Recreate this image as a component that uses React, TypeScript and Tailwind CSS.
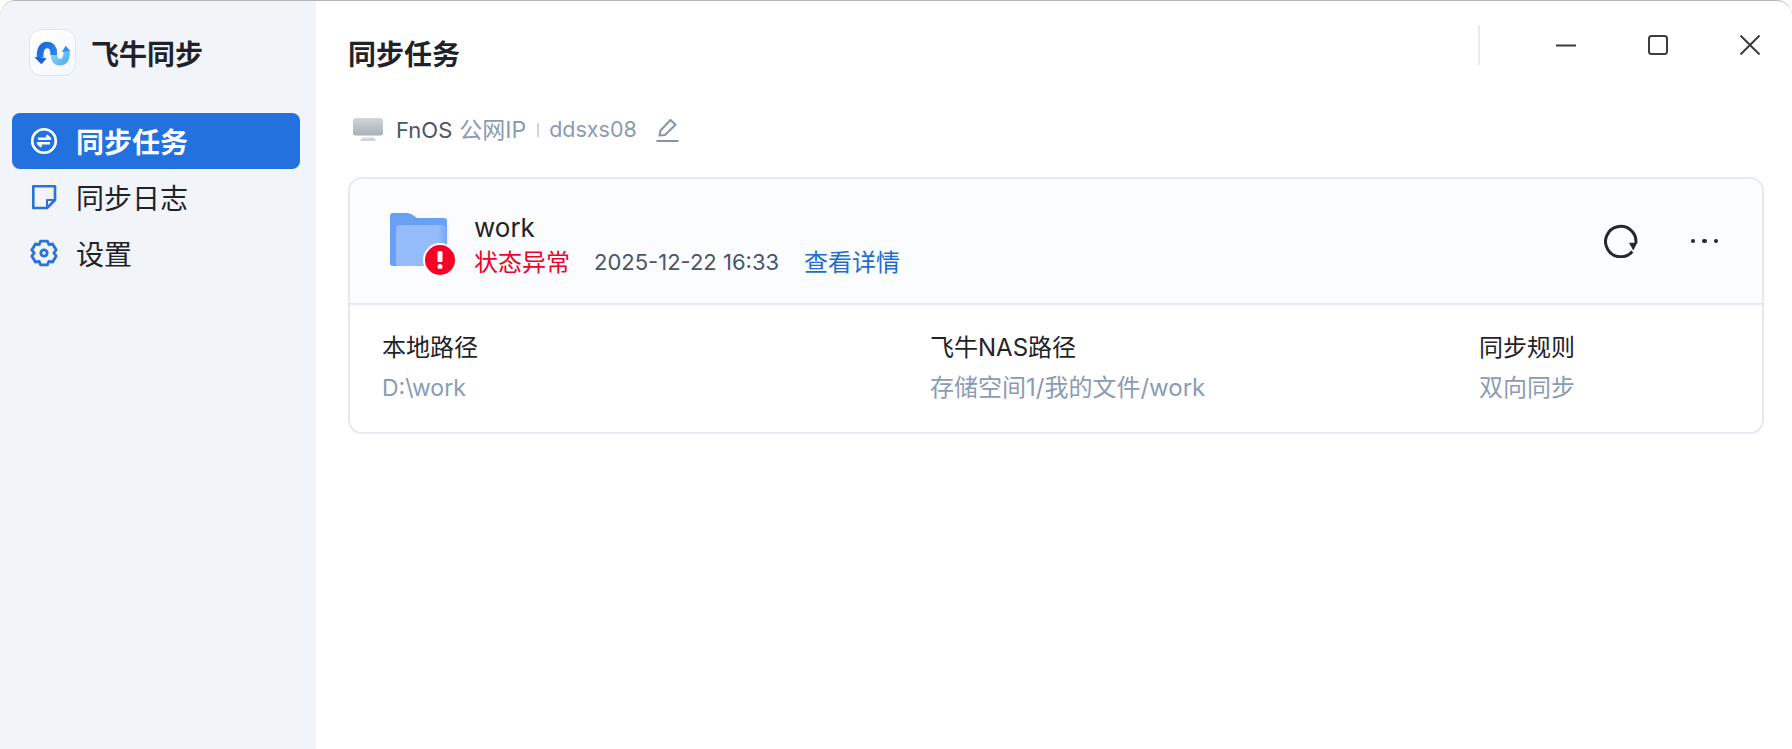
import React from "react";

const font = { fontFamily: '"Inter", "Noto Sans CJK SC", sans-serif' };

function Logo() {
  return (
    <div className="flex h-[47px] w-[47px] shrink-0 items-center justify-center rounded-[12px] border border-[#dfe3f3] bg-gradient-to-br from-white to-[#f3f7fe]">
      <svg width="46" height="46" viewBox="0 0 46 46" fill="none">
        <defs>
          <linearGradient id="lg1" x1="8" y1="12" x2="26" y2="28" gradientUnits="userSpaceOnUse">
            <stop offset="0" stopColor="#1a5fd6" />
            <stop offset="1" stopColor="#2f8df0" />
          </linearGradient>
          <linearGradient id="lg2" x1="22" y1="20" x2="40" y2="36" gradientUnits="userSpaceOnUse">
            <stop offset="0" stopColor="#8fd8fc" />
            <stop offset="1" stopColor="#45a8f4" />
          </linearGradient>
        </defs>
        <path d="M24 21 C24 28 26 32.5 30.5 32.5 C35 32.5 37.5 29 37.5 22" stroke="url(#lg2)" strokeWidth="6.5" />
        <path d="M32.5 22 L36.5 15.5 L41.5 21.5 Z" fill="#2f8fec" />
        <path d="M10.5 28 C9.5 19 13 14.8 17.3 14.8 C21.8 14.8 24.3 18 24.3 23 L24.3 25" stroke="url(#lg1)" strokeWidth="6.8" />
        <path d="M4.3 27 L17 28.3 L11.7 34.5 Z" fill="#1a5fd6" />
      </svg>
    </div>
  );
}

function SyncIcon() {
  return (
    <svg width="28" height="28" viewBox="0 0 28 28" fill="none" stroke="#fff" strokeWidth="2.6">
      <circle cx="14" cy="14" r="11.8" />
      <path d="M8 11.7 H20 L16.5 8.4" strokeLinejoin="round" />
      <path d="M20 16.3 H8 L11.5 19.6" strokeLinejoin="round" />
    </svg>
  );
}

function NoteIcon() {
  return (
    <svg width="28" height="28" viewBox="0 0 28 28" fill="none" stroke="#2a72d8" strokeWidth="2.6">
      <path d="M3.3 3.3 H25 V17 L17 25 H3.3 Z" strokeLinejoin="round" />
      <path d="M25 17 H17 V25" strokeLinejoin="round" strokeWidth="2" />
    </svg>
  );
}

function GearIcon() {
  return (
    <svg width="28" height="28" viewBox="0 0 28 28" fill="none" stroke="#2a72d8" strokeWidth="2.8" strokeLinejoin="round">
      <path d="M10.5 2.2 H17.5 L18.8 5.6 L22.6 5 L26.2 11 L23.8 14 L26.2 17 L22.6 23 L18.8 22.4 L17.5 25.8 H10.5 L9.2 22.4 L5.4 23 L1.8 17 L4.2 14 L1.8 11 L5.4 5 L9.2 5.6 Z" />
      <circle cx="14" cy="14" r="3.2" />
    </svg>
  );
}

function Monitor() {
  return (
    <svg width="30" height="24" viewBox="0 0 30 24">
      <defs>
        <linearGradient id="mon" x1="0" y1="0" x2="0" y2="1">
          <stop offset="0" stopColor="#d3d6dc" />
          <stop offset="1" stopColor="#a9aeb8" />
        </linearGradient>
      </defs>
      <rect x="0" y="0" width="30" height="17.5" rx="2.5" fill="url(#mon)" />
      <path d="M7 23 Q8 19.5 11 19.5 H19 Q22 19.5 23 23 Z" fill="#d2d5da" />
    </svg>
  );
}

function Pencil() {
  return (
    <svg width="24" height="24" viewBox="0 0 24 24" fill="none" stroke="#8494ab" strokeWidth="2" strokeLinejoin="round">
      <path d="M3.5 17.5 L4.5 12.5 L14.5 2 L19.5 6.8 L9 17 Z" />
      <path d="M0.5 23 H22.5" strokeWidth="2.2" />
    </svg>
  );
}

function FolderBadge() {
  return (
    <div className="relative mt-[8px] h-[64px] w-[68px] shrink-0">
      <svg width="68" height="64" viewBox="0 0 68 64">
        <defs>
          <linearGradient id="fold" x1="0" y1="0" x2="1" y2="0">
            <stop offset="0" stopColor="#94bbfa" />
            <stop offset="0.78" stopColor="#94bbfa" />
            <stop offset="1" stopColor="#94bbfa" stopOpacity="0" />
          </linearGradient>
        </defs>
        <path d="M0 3 Q0 0 3 0 H17 Q20 0 22 1.5 L27 5 H54 Q57 5 57 8 V50 Q57 53 54 53 H3 Q0 53 0 50 Z" fill="#68a0f6" />
        <path d="M6 15 Q6 12 9 12 H60 V53 H8 Q6 53 6 51 Z" fill="url(#fold)" />
      </svg>
      <div className="absolute left-[33px] top-[30px] flex h-[34px] w-[34px] items-center justify-center rounded-full border-[2px] border-white bg-[#fb0026]">
        <svg width="8" height="18" viewBox="0 0 8 18" fill="#fff">
          <rect x="1.5" y="0" width="5" height="11" rx="1.5" />
          <circle cx="4" cy="15.5" r="2.5" />
        </svg>
      </div>
    </div>
  );
}

function NavItem({ icon, label, active }: { icon: React.ReactNode; label: string; active?: boolean }) {
  return (
    <div
      className={
        active
          ? "flex h-[56px] items-center gap-[18px] rounded-[8px] bg-[#2271de] pl-[18px] text-[28px] font-bold text-white"
          : "flex h-[56px] items-center gap-[18px] pl-[18px] text-[28px] text-[#1f2329]"
      }
    >
      {icon}
      <span className="pt-[3px] leading-none">{label}</span>
    </div>
  );
}

function Col({ label, value, className, small }: { label: string; value: string; className: string; small?: boolean }) {
  return (
    <div className={className}>
      <div className="text-[24px] leading-[32px] text-[#1f2329]">{label}</div>
      <div className={small ? "mt-[8px] text-[23px] leading-[32px] text-[#8a9bb3]" : "mt-[8px] text-[24px] leading-[32px] text-[#8a9bb3]"}>{value}</div>
    </div>
  );
}

export default function App() {
  return (
    <div className="h-[749px] w-[1792px] overflow-hidden bg-white" style={font}>
      <div className="flex h-full overflow-hidden rounded-t-[16px] border-t border-[#b4b4b4]">
        <aside className="flex w-[316px] shrink-0 flex-col bg-[#f1f4f9]">
          <div className="flex items-center gap-[15px] pl-[29px] pt-[28px]">
            <Logo />
            <span className="pt-[4px] text-[28px] font-bold leading-none text-[#1f2329]">飞牛同步</span>
          </div>
          <nav className="mt-[37px] flex flex-col pl-[12px] pr-[16px]">
            <NavItem icon={<SyncIcon />} label="同步任务" active />
            <NavItem icon={<NoteIcon />} label="同步日志" />
            <NavItem icon={<GearIcon />} label="设置" />
          </nav>
        </aside>

        <main className="flex min-w-0 flex-1 flex-col pl-[32px] pr-[28px]">
          <header className="flex h-[106px] items-start justify-between">
            <h1 className="pt-[37px] text-[28px] font-bold leading-[34px] text-[#1f2329]">同步任务</h1>
            <div className="flex items-start pr-[4px] pt-[24px]">
              <div className="h-[40px] w-[2px] bg-[#e6e9ef]" />
              <div className="ml-[76px] flex items-center gap-[72px] pt-[10px] text-[#3a3d42]">
                <svg width="20" height="20" viewBox="0 0 20 20" stroke="currentColor" strokeWidth="2" fill="none">
                  <path d="M0 10.5 H20" />
                </svg>
                <svg width="20" height="20" viewBox="0 0 20 20" stroke="currentColor" strokeWidth="2" fill="none">
                  <rect x="1" y="1" width="18" height="18" rx="2.5" />
                </svg>
                <svg width="20" height="20" viewBox="0 0 20 20" stroke="currentColor" strokeWidth="2" fill="none">
                  <path d="M0.5 0.5 L19.5 19.5 M19.5 0.5 L0.5 19.5" />
                </svg>
              </div>
            </div>
          </header>

          <div className="flex h-[46px] items-center pl-[5px] leading-none">
            <Monitor />
            <span className="ml-[13px] text-[22px] text-[#4a5568]">FnOS</span>
            <span className="ml-[7px] text-[23px] text-[#8a9bb3]">公网IP</span>
            <span className="ml-[11px] h-[14px] w-[2px] bg-[#cdd5df]" />
            <span className="ml-[10px] text-[21.5px] text-[#8a9bb3]">ddsxs08</span>
            <span className="ml-[19px]">
              <Pencil />
            </span>
          </div>

          <section className="mt-[24px] h-[257px] overflow-hidden rounded-[14px] border-2 border-[#e6e9ef]">
            <div className="flex h-[126px] items-center justify-between border-b-2 border-[#e6e9ef] bg-[#fbfcfe] pl-[40px] pr-[44px]">
              <div className="flex items-center">
                <FolderBadge />
                <div className="ml-[16px] mt-[8px] flex flex-col">
                  <div className="text-[26px] leading-[35px] text-[#1f2329]">work</div>
                  <div className="flex items-center text-[24px] leading-[35px]">
                    <span className="text-[#f0002a]">状态异常</span>
                    <span className="ml-[24px] text-[22px] text-[#4a5568]">2025-12-22 16:33</span>
                    <span className="ml-[25px] text-[#226ccf]">查看详情</span>
                  </div>
                </div>
              </div>
              <div className="flex items-center gap-[53px]">
                <svg width="34" height="34" viewBox="0 0 34 34" fill="none">
                  <path d="M28.3 27.5 A15.2 15.2 0 1 1 31.9 19" stroke="#26282c" strokeWidth="3" />
                  <path d="M25 18.7 L33.3 18.7 L29.3 26.5 Z" fill="#26282c" />
                </svg>
                <div className="flex items-center gap-[7px]">
                  <span className="h-[4.5px] w-[4.5px] rounded-full bg-[#26282c]" />
                  <span className="h-[4.5px] w-[4.5px] rounded-full bg-[#26282c]" />
                  <span className="h-[4.5px] w-[4.5px] rounded-full bg-[#26282c]" />
                </div>
              </div>
            </div>
            <div className="flex pl-[32px] pt-[27px]">
              <Col className="w-[548px]" label="本地路径" value="D:\work" small />
              <Col className="w-[549px]" label="飞牛NAS路径" value="存储空间1/我的文件/work" />
              <Col className="flex-1" label="同步规则" value="双向同步" />
            </div>
          </section>
        </main>
      </div>
    </div>
  );
}
